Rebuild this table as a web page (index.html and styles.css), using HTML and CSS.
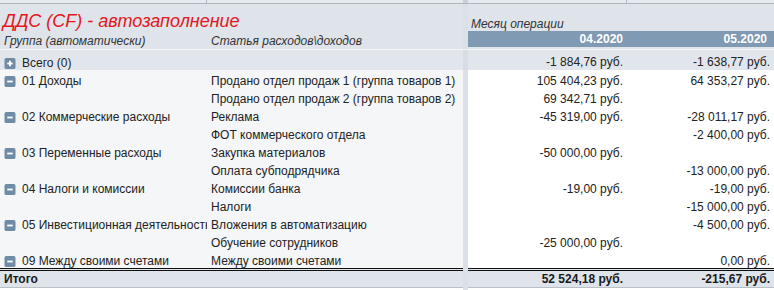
FILE: index.html
```html
<!DOCTYPE html>
<html lang="ru">
<head>
<meta charset="utf-8">
<title>ДДС (CF) - автозаполнение</title>
<link rel="stylesheet" href="styles.css">
</head>
<body>
<div class="report">
  <div class="strip">
    <div class="s1"></div><div class="s2"></div><div class="band"></div><div class="s4"></div><div class="s5"></div>
  </div>
  <div class="head">
    <div class="title">ДДС (CF) - автозаполнение</div>
    <div class="hcap hc1">Группа (автоматически)</div>
    <div class="hcap hc2">Статья расходов\доходов</div>
    <div class="band hband"></div>
    <div class="month">Месяц операции</div>
    <div class="mcol m1">04.2020</div>
    <div class="mcol m2">05.2020</div>
  </div>

  <div class="row total-top">
    <div class="c1"><svg class="ico" width="12" height="12" viewBox="0 0 12 12"><rect width="12" height="12" rx="2" fill="#6f8ba6"/><rect x="3" y="5" width="6" height="2" fill="#fff"/><rect x="5" y="3" width="2" height="6" fill="#fff"/></svg>Всего (0)</div>
    <div class="c2"></div><div class="band"></div>
    <div class="v1">-1 884,76 руб.</div><div class="v2">-1 638,77 руб.</div>
  </div>

  <div class="row">
    <div class="c1"><svg class="ico" width="12" height="12" viewBox="0 0 12 12"><rect width="12" height="12" rx="2" fill="#6f8ba6"/><rect x="3" y="5" width="6" height="2" fill="#fff"/></svg>01 Доходы</div>
    <div class="c2">Продано отдел продаж 1 (группа товаров 1)</div><div class="band"></div>
    <div class="v1">105 404,23 руб.</div><div class="v2">64 353,27 руб.</div>
  </div>
  <div class="row">
    <div class="c1"></div>
    <div class="c2">Продано отдел продаж 2 (группа товаров 2)</div><div class="band"></div>
    <div class="v1">69 342,71 руб.</div><div class="v2"></div>
  </div>
  <div class="row">
    <div class="c1"><svg class="ico" width="12" height="12" viewBox="0 0 12 12"><rect width="12" height="12" rx="2" fill="#6f8ba6"/><rect x="3" y="5" width="6" height="2" fill="#fff"/></svg>02 Коммерческие расходы</div>
    <div class="c2">Реклама</div><div class="band"></div>
    <div class="v1">-45 319,00 руб.</div><div class="v2">-28 011,17 руб.</div>
  </div>
  <div class="row">
    <div class="c1"></div>
    <div class="c2">ФОТ коммерческого отдела</div><div class="band"></div>
    <div class="v1"></div><div class="v2">-2 400,00 руб.</div>
  </div>
  <div class="row">
    <div class="c1"><svg class="ico" width="12" height="12" viewBox="0 0 12 12"><rect width="12" height="12" rx="2" fill="#6f8ba6"/><rect x="3" y="5" width="6" height="2" fill="#fff"/></svg>03 Переменные расходы</div>
    <div class="c2">Закупка материалов</div><div class="band"></div>
    <div class="v1">-50 000,00 руб.</div><div class="v2"></div>
  </div>
  <div class="row">
    <div class="c1"></div>
    <div class="c2">Оплата субподрядчика</div><div class="band"></div>
    <div class="v1"></div><div class="v2">-13 000,00 руб.</div>
  </div>
  <div class="row">
    <div class="c1"><svg class="ico" width="12" height="12" viewBox="0 0 12 12"><rect width="12" height="12" rx="2" fill="#6f8ba6"/><rect x="3" y="5" width="6" height="2" fill="#fff"/></svg>04 Налоги и комиссии</div>
    <div class="c2">Комиссии банка</div><div class="band"></div>
    <div class="v1">-19,00 руб.</div><div class="v2">-19,00 руб.</div>
  </div>
  <div class="row">
    <div class="c1"></div>
    <div class="c2">Налоги</div><div class="band"></div>
    <div class="v1"></div><div class="v2">-15 000,00 руб.</div>
  </div>
  <div class="row">
    <div class="c1"><svg class="ico" width="12" height="12" viewBox="0 0 12 12"><rect width="12" height="12" rx="2" fill="#6f8ba6"/><rect x="3" y="5" width="6" height="2" fill="#fff"/></svg>05 Инвестиционная деятельность</div>
    <div class="c2">Вложения в автоматизацию</div><div class="band"></div>
    <div class="v1"></div><div class="v2">-4 500,00 руб.</div>
  </div>
  <div class="row">
    <div class="c1"></div>
    <div class="c2">Обучение сотрудников</div><div class="band"></div>
    <div class="v1">-25 000,00 руб.</div><div class="v2"></div>
  </div>
  <div class="row">
    <div class="c1"><svg class="ico" width="12" height="12" viewBox="0 0 12 12"><rect width="12" height="12" rx="2" fill="#6f8ba6"/><rect x="3" y="5" width="6" height="2" fill="#fff"/></svg>09 Между своими счетами</div>
    <div class="c2">Между своими счетами</div><div class="band"></div>
    <div class="v1"></div><div class="v2">0,00 руб.</div>
  </div>

  <div class="row grand">
    <div class="c1">Итого</div>
    <div class="c2"></div><div class="band"></div>
    <div class="v1">52 524,18 руб.</div><div class="v2">-215,67 руб.</div>
  </div>
  <div class="row tail">
    <div></div><div></div><div class="band"></div><div></div><div></div>
  </div>
</div>
</body>
</html>
```

FILE: styles.css
```css
* { box-sizing: border-box; }

html, body {
  margin: 0;
  padding: 0;
  background: #ffffff;
}

body {
  font-family: "Liberation Sans", Arial, sans-serif;
  font-size: 12px;
  color: #222222;
  width: 774px;
  height: 290px;
  overflow: hidden;
}

.report {
  width: 774px;
}

.strip,
.head,
.row {
  display: grid;
  grid-template-columns: 207px 256px 5px 159px 147px;
}

.band {
  background: #dbe1e7;
}

/* top strip */
.strip {
  height: 4px;
  background: #e6e9ed;
  border-bottom: 1px solid #aeb6bf;
}
.strip .s1 { border-right: 1px solid #b3bac2; }
.strip .s4 { border-right: 1px solid #b3bac2; }
.strip .band { background: #c9d0d8; }

/* header */
.head {
  grid-template-rows: 27px 16px 2px;
  background: #dee4ea;
  border-bottom: 1px solid #f3f5f7;
}

.title {
  grid-column: 1 / 3;
  grid-row: 1;
  align-self: end;
  padding-left: 3px;
  font-size: 18px;
  line-height: 20px;
  font-style: italic;
  color: #e5161d;
  white-space: nowrap;
}

.hcap {
  grid-row: 2 / 4;
  align-self: end;
  font-style: italic;
  line-height: 14px;
  color: #333333;
  padding-bottom: 1px;
  white-space: nowrap;
}
.hc1 { grid-column: 1; padding-left: 4px; }
.hc2 { grid-column: 2; padding-left: 4px; }

.hband {
  grid-column: 3;
  grid-row: 1 / 4;
}

.month {
  grid-column: 4 / 6;
  grid-row: 1;
  align-self: end;
  padding-left: 3px;
  font-style: italic;
  line-height: 14px;
  color: #333333;
}

.mcol {
  grid-row: 2;
  background: #7f9ab2;
  color: #ffffff;
  font-weight: bold;
  text-align: right;
  line-height: 16px;
}
.m1 { grid-column: 4; padding-right: 4px; }
.m2 { grid-column: 5; padding-right: 7px; }

/* data rows */
.row {
  height: 18px;
}

.row > div {
  padding-top: 5px;
  line-height: 13px;
  white-space: nowrap;
  overflow: hidden;
}

.row .band { padding: 0; }

.c1,
.c2 {
  background: #f4f6f8;
}

.c1 {
  display: flex;
  align-items: center;
  padding-left: 4px;
  align-self: stretch;
}
.row > .c1 {
  padding-top: 5px;
  align-items: center;
}

.ico {
  flex: none;
  width: 12px;
  height: 11px;
  margin-right: 6px;
}

.c2 {
  padding-left: 4px;
}

.v1,
.v2 {
  text-align: right;
}
.v1 { padding-right: 4px; }
.v2 { padding-right: 4px; }

.row.total-top {
  height: 20px;
}
.row.total-top > div {
  padding-top: 6px;
  background: #e1e6ec;
}
.row.total-top > .band { background: #d7dde4; padding: 0; }

/* grand total */
.row.grand {
  height: 20px;
}
.row.grand > div {
  padding-top: 0;
  line-height: 16px;
  font-weight: bold;
  background: #dee4ea;
  border-top: 3px double #111111;
  border-bottom: 1px solid #b9c0c8;
  color: #1a1a1a;
}
.row.grand > .band {
  border-top: 0;
  border-bottom: 0;
  background: #dbe1e7;
}

.row.tail {
  height: 2px;
}
.row.tail > div {
  padding: 0;
}
```
